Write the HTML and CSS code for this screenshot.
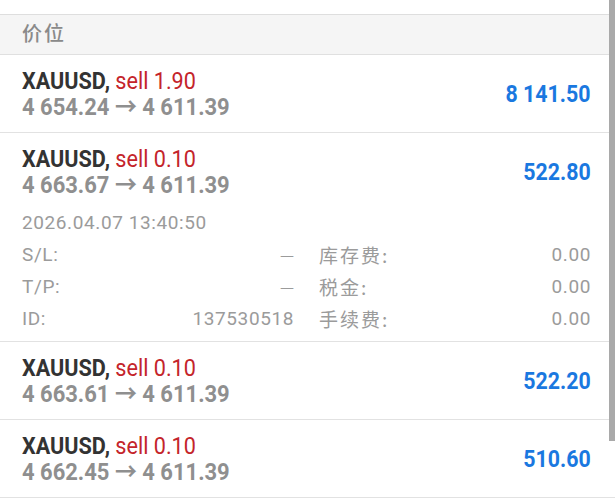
FILE: index.html
```html
<!DOCTYPE html>
<html lang="zh-CN">
<head>
    <meta charset="UTF-8">
    <meta name="viewport" content="width=device-width, initial-scale=1.0">
    <title>持仓</title>
    <link rel="stylesheet" href="styles.css">
</head>
<body>
    <div class="topbar"></div>
    <div class="section-head">价位</div>

    <div class="positions">
        <div class="pos">
            <div class="pos-main">
                <div class="pos-info">
                    <div class="pos-title"><span class="symbol">XAUUSD,</span> <span class="sell">sell 1.90</span></div>
                    <div class="pos-price">4 654.24 → 4 611.39</div>
                </div>
                <div class="pos-profit">8 141.50</div>
            </div>
        </div>

        <div class="pos open">
            <div class="pos-main">
                <div class="pos-info">
                    <div class="pos-title"><span class="symbol">XAUUSD,</span> <span class="sell">sell 0.10</span></div>
                    <div class="pos-price">4 663.67 → 4 611.39</div>
                </div>
                <div class="pos-profit">522.80</div>
            </div>
            <div class="pos-details">
                <div class="pos-time">2026.04.07 13:40:50</div>
                <div class="detail-grid">
                    <div class="detail"><span>S/L:</span><span class="dash">—</span></div>
                    <div class="detail"><span class="cn">库存费:</span><span>0.00</span></div>
                    <div class="detail"><span>T/P:</span><span class="dash">—</span></div>
                    <div class="detail"><span class="cn">税金:</span><span>0.00</span></div>
                    <div class="detail"><span>ID:</span><span>137530518</span></div>
                    <div class="detail"><span class="cn">手续费:</span><span>0.00</span></div>
                </div>
            </div>
        </div>

        <div class="pos">
            <div class="pos-main">
                <div class="pos-info">
                    <div class="pos-title"><span class="symbol">XAUUSD,</span> <span class="sell">sell 0.10</span></div>
                    <div class="pos-price">4 663.61 → 4 611.39</div>
                </div>
                <div class="pos-profit">522.20</div>
            </div>
        </div>

        <div class="pos">
            <div class="pos-main">
                <div class="pos-info">
                    <div class="pos-title"><span class="symbol">XAUUSD,</span> <span class="sell">sell 0.10</span></div>
                    <div class="pos-price">4 662.45 → 4 611.39</div>
                </div>
                <div class="pos-profit">510.60</div>
            </div>
        </div>
    </div>

    <div class="scrollbar"></div>
</body>
</html>
```

FILE: styles.css
```css
body {
    font-family: Roboto, "Noto Sans CJK SC", sans-serif;
    margin: 0;
    padding: 0;
    background-color: #fff;
    color: #333;
}
.topbar {
    height: 14px;
    border-bottom: 1px solid #dedede;
}
.section-head {
    height: 39px;
    line-height: 35px;
    padding-left: 22px;
    background-color: #f5f5f5;
    border-bottom: 1px solid #e0e0e0;
    color: #8a8a8a;
    font-family: "Noto Sans CJK SC", sans-serif;
    font-size: 20px;
    font-weight: 500;
    letter-spacing: 2px;
}
.pos {
    padding: 13px 24px 12px 22px;
    border-bottom: 1px solid #e2e2e2;
}
.pos.open {
    padding-bottom: 6px;
}
.pos-main {
    display: flex;
    align-items: center;
    justify-content: space-between;
}
/* condensed look: the app font is narrower than Roboto */
.pos-title, .pos-price {
    font-size: 24px;
    line-height: 26px;
    white-space: nowrap;
    transform: scaleX(0.9);
    transform-origin: left center;
}
.pos-price {
    font-weight: 700;
    color: #8f8f8f;
    transform: scaleX(0.915);
}
.symbol {
    font-weight: 700;
    color: #333;
}
.sell {
    color: #c4242b;
}
.pos-profit {
    font-size: 24px;
    font-weight: 700;
    color: #1a78e0;
    transform: scaleX(0.89);
    transform-origin: right center;
}
.pos-details {
    margin-top: 9px;
    color: #9b9b9b;
    font-size: 19px;
    letter-spacing: 0.6px;
}
.pos-time {
    line-height: 32px;
}
.detail-grid {
    display: grid;
    grid-template-columns: 1fr 1fr;
    column-gap: 25px;
}
.detail {
    display: flex;
    justify-content: space-between;
    line-height: 32px;
}
.detail .dash {
    font-family: "DejaVu Sans", sans-serif;
    font-size: 14px;
    letter-spacing: 0;
}
.detail .cn {
    font-family: "Noto Sans CJK SC", sans-serif;
    letter-spacing: 2px;
}
.scrollbar {
    position: fixed;
    top: 0;
    right: 0;
    width: 6px;
    height: 441px;
    background-color: #a9a9a9;
}
```
